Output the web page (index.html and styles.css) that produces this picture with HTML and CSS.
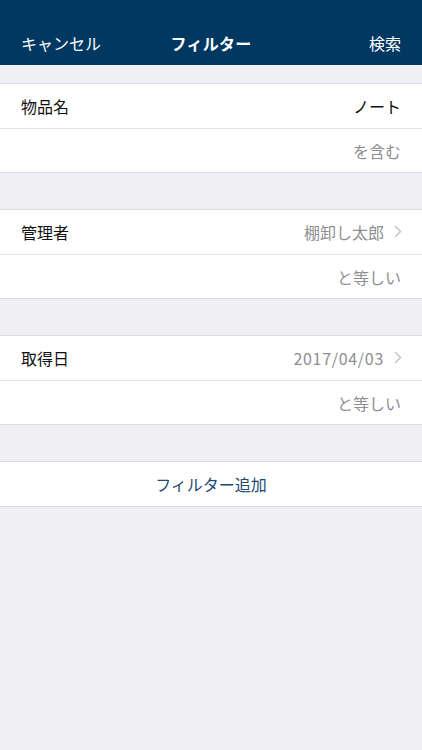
FILE: index.html
```html
<!DOCTYPE html>
<html lang="ja">
<head>
<meta charset="utf-8">
<title>フィルター</title>
<link rel="stylesheet" href="styles.css">
</head>
<body>
<header class="navbar">
  <div class="navbar-inner">
    <span class="nav-btn left">キャンセル</span>
    <span class="nav-title">フィルター</span>
    <span class="nav-btn right">検索</span>
  </div>
</header>
<main class="content">
  <section class="group">
    <div class="row">
      <span class="label">物品名</span>
      <span class="value dark">ノート</span>
    </div>
    <div class="row">
      <span class="label"></span>
      <span class="value">を含む</span>
    </div>
  </section>
  <section class="group">
    <div class="row">
      <span class="label">管理者</span>
      <span class="value">棚卸し太郎<svg class="chevron" viewBox="0 0 8 13" width="8" height="13"><path d="M1 1 L6.5 6.5 L1 12" fill="none" stroke="#c7c7cc" stroke-width="1.6"/></svg></span>
    </div>
    <div class="row">
      <span class="label"></span>
      <span class="value">と等しい</span>
    </div>
  </section>
  <section class="group">
    <div class="row">
      <span class="label">取得日</span>
      <span class="value"><span class="date">2017/04/03</span><svg class="chevron" viewBox="0 0 8 13" width="8" height="13"><path d="M1 1 L6.5 6.5 L1 12" fill="none" stroke="#c7c7cc" stroke-width="1.6"/></svg></span>
    </div>
    <div class="row">
      <span class="label"></span>
      <span class="value">と等しい</span>
    </div>
  </section>
  <section class="group">
    <div class="row center">
      <span class="action">フィルター追加</span>
    </div>
  </section>
</main>
</body>
</html>
```

FILE: styles.css
```css
html, body {
  margin: 0;
  padding: 0;
}
body {
  width: 422px;
  height: 750px;
  background: #efeff4;
  font-family: "Noto Sans CJK JP", "Noto Sans", sans-serif;
  font-size: 16px;
  color: #111;
  overflow: hidden;
}
.navbar {
  background: #003862;
  height: 65px;
  padding-top: 21px;
  box-sizing: border-box;
}
.navbar-inner {
  height: 44px;
  display: grid;
  grid-template-columns: 1fr auto 1fr;
  align-items: center;
  padding: 0 21px;
  color: #fff;
}
.nav-btn {
  font-size: 16px;
  line-height: 1;
}
.nav-btn.right {
  justify-self: end;
}
.nav-title {
  font-size: 16px;
  font-weight: 700;
  line-height: 1;
  letter-spacing: 0.3px;
}
.content {
  display: flex;
  flex-direction: column;
  gap: 36px;
  padding-top: 18px;
}
.group {
  background: #fff;
  border-top: 1px solid #dcdce0;
  border-bottom: 1px solid #dcdce0;
}
.row {
  height: 44px;
  box-sizing: border-box;
  display: flex;
  align-items: center;
  justify-content: space-between;
  padding: 0 21px 1px;
}
.row + .row {
  border-top: 1px solid #e4e4e8;
  padding-bottom: 0;
}
.row.center {
  justify-content: center;
}
.label {
  color: #111;
  line-height: 1;
}
.value {
  color: #8e8e93;
  line-height: 1;
  display: flex;
  align-items: center;
}
.value.dark {
  color: #111;
}
.date {
  letter-spacing: 0.7px;
}
.chevron {
  margin-left: 10px;
  margin-right: -1px;
}
.action {
  color: #1d4a72;
  line-height: 1;
}
```
